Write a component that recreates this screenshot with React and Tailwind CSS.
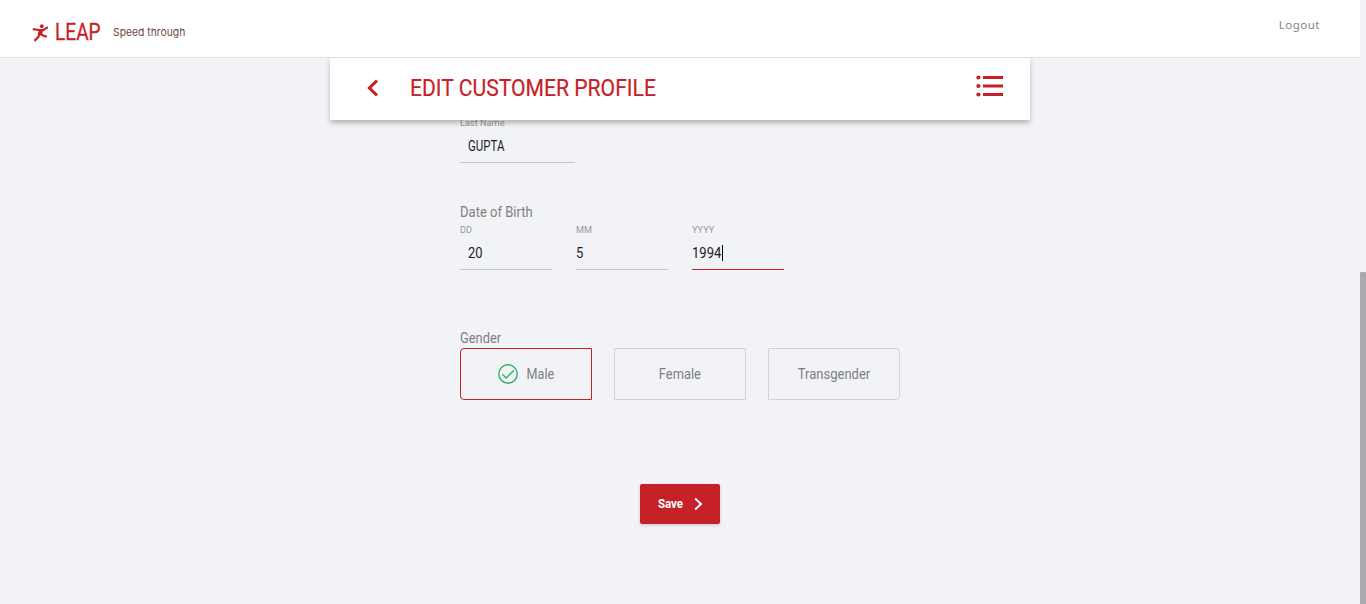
import React from "react";

function Runner() {
  return (
    <svg className="block h-[18px] w-[17px]" viewBox="0 0 17 18" fill="none" stroke="#c62128">
      <circle cx="9.8" cy="2.2" r="1.9" fill="#c62128" stroke="none" />
      <path d="M0.8 5.2 L7 6 L11.2 6.2 L15.8 3.2" strokeWidth="2.2" />
      <path d="M9.2 5.6 L7.8 10.4" strokeWidth="4.2" />
      <path d="M7.6 9.4 L10.6 11.2 L14.8 12.8" strokeWidth="2.3" />
      <path d="M7.4 9.4 L6.4 13 L2.4 16.8" strokeWidth="2.3" />
    </svg>
  );
}

function Field({ label, value, className = "", inset = false, focused = false }) {
  return (
    <div className={`flex h-[47px] flex-col border-b ${focused ? "border-[#c62128]" : "border-[#c4c5ca]"} ${className}`}>
      <span className="h-[14px] origin-left scale-x-[0.96] whitespace-nowrap text-[9.6px] leading-[13px] text-[#9a9a9a]">{label}</span>
      <span className={`mt-[6px] flex h-[20px] items-center ${inset ? "pl-2" : ""}`}>
        <span className={`inline-block origin-left text-[14px] leading-[20px] text-[#1c1c1c] ${value === "GUPTA" ? "scale-x-[0.82]" : "scale-x-[0.93]"}`}>{value}</span>
        {focused && <span className="-ml-[1px] h-[16px] w-px bg-black" />}
      </span>
    </div>
  );
}

function Option({ children, className = "border-[#d2d3d7]" }) {
  return (
    <div className={`flex h-[52px] w-[132px] items-center justify-center border text-[14px] text-[#7f7f7f] ${className}`}>{children}</div>
  );
}

export default function App() {
  return (
    <div className="flex h-[604px] w-[1366px] overflow-hidden bg-[#f1f3f7] font-['Roboto',sans-serif]">
      <div className="flex w-[1360px] flex-col">
        <header className="flex h-[58px] shrink-0 justify-between border-b border-[#e2e3e6] bg-white">
          <div className="flex items-start pl-8">
            <div className="pt-6"><Runner /></div>
            <span className="ml-[6px] w-[46px] pt-[19px]">
              <span className="inline-block origin-left scale-x-[0.83] text-[23px] leading-[28px] text-[#c62128] [-webkit-text-stroke:0.3px_#c62128]">LEAP</span>
            </span>
            <span className="ml-3 pt-6 font-['Inter',sans-serif] text-[11px] leading-4 text-[#6d4640]">
              <span className="inline-block origin-left scale-x-[0.94]">Speed through</span>
            </span>
          </div>
          <span className="mr-10 pt-4 font-['Noto_Sans',sans-serif] text-[11.5px] leading-[17px] tracking-[0.5px] text-[#858585]">Logout</span>
        </header>
        <main className="flex flex-col items-center">
          <div className="z-10 mb-px flex h-[62px] w-[700px] shrink-0 items-center bg-white shadow-[0_3px_5px_rgba(0,0,0,0.26)]">
            <svg className="ml-[37px] -mt-[2px] h-[18px] w-[12px]" viewBox="0 0 12 18" fill="none" stroke="#c62128" strokeWidth="3">
              <path d="M10 1.6 L2.4 9 L10 16.4" />
            </svg>
            <h1 className="mr-auto -mt-[3px] ml-[31px] w-[566px]">
              <span className="inline-block origin-left scale-x-[0.88] whitespace-nowrap text-[24px] leading-[32px] text-[#c62128] [-webkit-text-stroke:0.2px_#c62128]">EDIT CUSTOMER PROFILE</span>
            </h1>
            <svg className="mr-[27px] -mt-[6px] h-[23px] w-[27px] shrink-0" viewBox="0 0 27 23" fill="#c62128">
              <circle cx="2.4" cy="2.5" r="2.1" /><circle cx="2.4" cy="11" r="2.1" /><circle cx="2.4" cy="19.5" r="2.1" />
              <rect x="7" y="1" width="20" height="3" /><rect x="7" y="9.5" width="20" height="3" /><rect x="7" y="18" width="20" height="3" />
            </svg>
          </div>
          <form className="-mt-[5px] flex w-[440px] flex-col">
            <Field label="Last Name" value="GUPTA" className="w-[115px]" inset />
            <span className="mt-[39px] h-5 origin-left scale-x-[0.93] text-[14px] leading-5 text-[#7f7f7f]">Date of Birth</span>
            <div className="mt-px flex gap-6">
              <Field label="DD" value="20" className="w-[92px]" inset />
              <Field label="MM" value="5" className="w-[92px]" />
              <Field label="YYYY" value="1994" className="w-[92px]" focused />
            </div>
            <span className="mt-[58px] h-5 origin-left scale-x-[0.92] text-[14px] leading-5 text-[#7f7f7f]">Gender</span>
            <div className="flex gap-[22px]">
              <Option className="rounded-l-[4px] border-[#c62128]">
                <svg className="mr-[7px] ml-px h-5 w-5" viewBox="0 0 20 20" fill="none" stroke="#2fb367" strokeWidth="1.4">
                  <circle cx="10" cy="10" r="9.2" />
                  <path d="M4.3 10.2 L8.2 14 L15.6 6.4" />
                </svg>
                <span className="scale-x-[0.9]">Male</span>
              </Option>
              <Option><span className="scale-x-[0.92]">Female</span></Option>
              <Option className="rounded-r-[4px] border-[#d2d3d7]"><span className="scale-x-[0.93]">Transgender</span></Option>
            </div>
            <div className="mt-[84px] flex h-10 w-20 items-center self-center rounded-[2px] bg-[#c62128] text-white shadow-[0_1px_3px_rgba(0,0,0,0.2)]">
              <span className="-mt-[2px] ml-[18px] w-[26px]"><span className="inline-block origin-left scale-x-[0.88] text-[13px] font-bold">Save</span></span>
              <svg className="ml-[10px] h-[14px] w-[9px]" viewBox="0 0 9 14" fill="none" stroke="white" strokeWidth="2">
                <path d="M1.2 1.5 L7 7 L1.2 12.5" />
              </svg>
            </div>
          </form>
        </main>
      </div>
      <div className="flex w-[6px] flex-col justify-end bg-[#f1f3f7]">
        <div className="h-[332px] rounded-t-[1px] bg-[#a9aaae]" />
      </div>
    </div>
  );
}
